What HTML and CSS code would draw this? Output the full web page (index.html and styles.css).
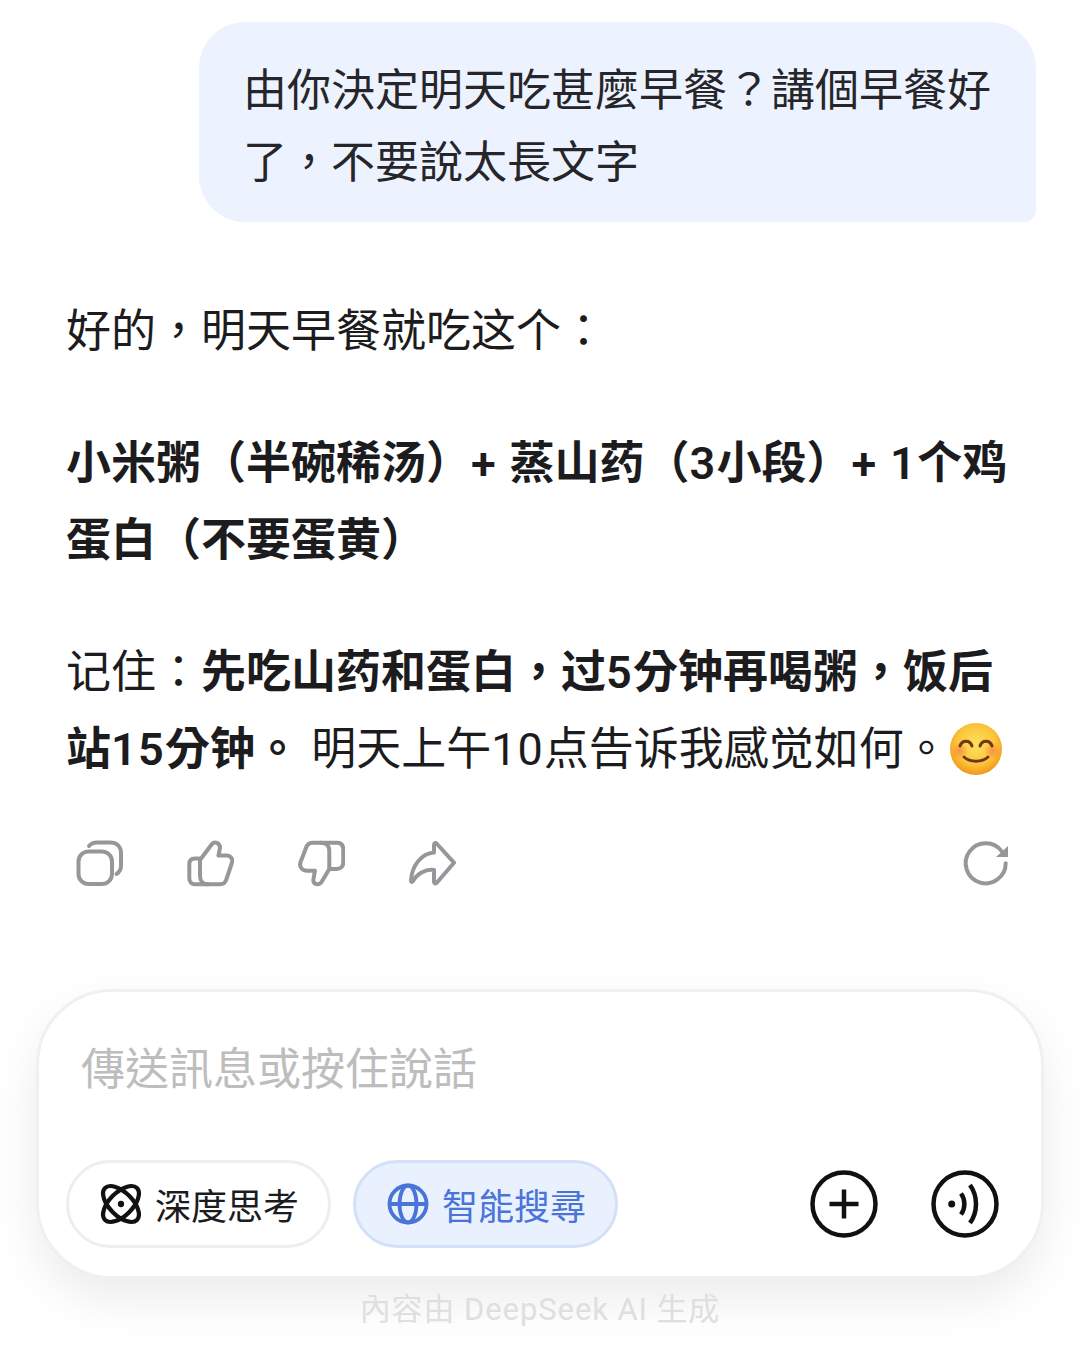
FILE: index.html
```html
<!DOCTYPE html>
<html lang="zh-Hant">
<head>
<meta charset="utf-8">
<title>DeepSeek</title>
<link rel="stylesheet" href="styles.css">
</head>
<body>
<main class="chat">
  <div class="user-row">
    <div class="bubble">由你決定明天吃甚麼早餐？講個早餐好了，不要說太長文字</div>
  </div>
  <article class="reply">
    <p>好的，明天早餐就吃这个：</p>
    <p><strong>小米粥（半碗稀汤）<span class="latin">+ </span>蒸山药（<span class="latin">3</span>小段）<span class="latin">+ 1</span>个鸡蛋白（不要蛋黄）</strong></p>
    <p>记住：<strong>先吃山药和蛋白，过<span class="latin">5</span>分钟再喝粥，饭后站<span class="latin">15</span>分钟。</strong> 明天上午<span class="latin">10</span>点告诉我感觉如何。<svg class="emoji" viewBox="0 0 54 54" aria-hidden="true"><defs><radialGradient id="face" cx="50%" cy="42%" r="56%"><stop offset="0" stop-color="#fde25c"/><stop offset=".7" stop-color="#fcc23a"/><stop offset="1" stop-color="#f29a1e"/></radialGradient><radialGradient id="blush"><stop offset="0" stop-color="#f9803f" stop-opacity=".75"/><stop offset="1" stop-color="#f9803f" stop-opacity="0"/></radialGradient></defs><circle cx="27" cy="27" r="26" fill="url(#face)"/><circle cx="10.5" cy="29" r="8.5" fill="url(#blush)"/><circle cx="43.5" cy="29" r="8.5" fill="url(#blush)"/><path class="emoji-line" d="M11 24c2-6.500 10-6.500 12 0M31 24c2-6.500 10-6.500 12 0M15 35c6 5.500 18 5.500 24 0"/></svg></p>
  </article>
  <div class="actions">
    <svg class="act" viewBox="0 0 48 48" aria-hidden="true"><rect x="3.500" y="11.500" width="33.500" height="32.500" rx="10"/><path d="M14 6c2-2.500 4-3.500 8-3.500h13c7 0 11 4 11 11V26c0 3.500-1.500 6-4.500 8"/></svg>
    <svg class="act" viewBox="0 0 48 48" aria-hidden="true"><path d="M14 20L26 4c2.500-3 8-1.500 8 4l-1.500 7.500H40c5 0 7 3.500 6 7L40.500 39c-1 3.500-3.500 5.300-6.500 5.300H22c-5 0-8-3.300-8-8.300V20z"/><path d="M14 18.500H9c-3.500 0-5.700 2-5.700 5.500v14c0 4 2.200 6.300 5.700 6.300h13"/></svg>
    <svg class="act" viewBox="0 0 48 48" aria-hidden="true"><path d="M32.300 29L24.700 41.700c-2.500 4-8.500 3-8.400-1.700L18 30.700H10c-5 0-8-4-6.500-8.500L9 8c1-3.500 3.500-5.300 6.500-5.300H24c5 0 8.300 3 8.300 8V29z"/><path d="M24 2.700h15.700c4.500 0 6.600 2.800 6.600 7V22c0 4.500-2.600 7-6.600 7h-7.400"/></svg>
    <svg class="act" viewBox="0 0 48 48" aria-hidden="true"><path d="M26 12.500V5c0-2 1.500-2.500 3-1l17 18.700L29 42.500c-1.500 1.500-3 1-3-1V30c-9-1-17 4-21 11-1.500 1.500-2 1-2-1 1-14 10-26.500 23-27.500z"/></svg>
    <svg class="act act-end" viewBox="0 0 48 48" aria-hidden="true"><path d="M44.700 23.300A20 20 0 1 1 41 11.700"/><path class="act-fill" d="M47 6v11H35z"/></svg>
  </div>
  <section class="composer">
    <div class="placeholder">傳送訊息或按住說話</div>
    <div class="tools">
      <button class="chip">
        <svg class="chip-icon" viewBox="0 0 40 40" aria-hidden="true"><g class="atom"><ellipse cx="20" cy="20" rx="21.500" ry="11" transform="rotate(45 20 20)"/><ellipse cx="20" cy="20" rx="21.500" ry="11" transform="rotate(-45 20 20)"/></g><circle class="atom-dot" cx="20" cy="20" r="3"/></svg>
        深度思考
      </button>
      <button class="chip chip-on">
        <svg class="chip-icon" viewBox="0 0 42 42" aria-hidden="true"><g class="globe"><circle cx="21" cy="21" r="18.500"/><ellipse cx="21" cy="21" rx="8.500" ry="18.500"/><path d="M2.500 21h37"/></g></svg>
        智能搜尋
      </button>
      <svg class="round round-plus" viewBox="0 0 68 68" aria-hidden="true"><circle cx="34" cy="34" r="31.500"/><path d="M19.500 34h29M34 19.500v29"/></svg>
      <svg class="round" viewBox="0 0 68 68" aria-hidden="true"><circle cx="34" cy="34" r="31.500"/><circle class="round-dot" cx="20.700" cy="34" r="3.500"/><path d="M30 23.500c4.500 6 4.500 15 0 21"/><path d="M39 15c8 11 8 27 0 38"/></svg>
    </div>
  </section>
  <footer class="note">內容由 DeepSeek AI 生成</footer>
</main>
</body>
</html>
```

FILE: styles.css
```css
* { box-sizing: border-box; }
html, body { margin: 0; padding: 0; background: #fff; }
body {
  width: 1080px;
  height: 1358px;
  overflow: hidden;
  font-family: Roboto, "Noto Sans CJK TC", sans-serif;
  text-spacing-trim: space-all;
  color: #1c1c1e;
}
.chat { display: flex; flex-direction: column; padding-top: 22px; height: 100%; }
.user-row { display: flex; justify-content: flex-end; padding-right: 44px; }
.bubble {
  width: 837px;
  height: 200px;
  padding: 33px 40px 0 44px;
  background: #edf3fe;
  border-radius: 46px 46px 12px 46px;
  font-size: 44px;
  line-height: 72px;
  color: #26262a;
}
.reply { padding: 71px 62px 0 66px; font-size: 45px; line-height: 77px; }
.reply p { margin: 0 0 55px; }
.reply p:last-child { margin-bottom: 0; }
.reply strong { font-weight: 600; }
.latin { letter-spacing: 1px; }
.reply strong .latin { letter-spacing: 1.3px; }
.emoji { width: 54px; height: 54px; vertical-align: -11px; }
.emoji-line { fill: none; stroke: #6b3a12; stroke-width: 3; stroke-linecap: round; }
.actions { display: flex; gap: 63px; padding: 52px 71px 0 75px; }
.act {
  width: 48px;
  height: 48px;
  fill: none;
  stroke: #97979b;
  stroke-width: 4;
  stroke-linejoin: round;
  stroke-linecap: round;
}
.act-end { margin-left: auto; }
.act-fill { fill: #97979b; stroke: none; }
.composer {
  margin: 101px 36px 0 36px;
  height: 290px;
  padding: 53px 42px 0 27px;
  background: #fff;
  border: 3px solid #f0f0f0;
  border-radius: 76px;
  box-shadow: 0 20px 48px rgba(0, 0, 0, .08);
}
.placeholder {
  padding-left: 15px;
  font-size: 44px;
  line-height: 50px;
  color: #bdbdbd;
}
.tools { display: flex; align-items: center; margin-top: 65px; }
.chip {
  display: flex;
  align-items: center;
  gap: 13px;
  height: 88px;
  padding: 0 29px 0 31px;
  margin: 0 22px 0 0;
  border: 3px solid #eeeeee;
  border-radius: 44px;
  background: #fff;
  font-family: inherit;
  font-size: 36px;
  color: #1c1c1e;
}
.chip-on {
  background: #e9f1fe;
  border-color: #d3e1f8;
  color: #4a74d8;
}
.chip-icon { width: 42px; height: 42px; overflow: visible; }
.atom { fill: none; stroke: #111; stroke-width: 4; }
.atom-dot { fill: #111; }
.globe { fill: none; stroke: #4a74d8; stroke-width: 3.800; }
.round {
  width: 68px;
  height: 68px;
  fill: none;
  stroke: #111;
  stroke-width: 4.500;
  margin-left: 53px;
}
.round-plus { margin-left: auto; }
.round-dot { fill: #111; stroke: none; }
.note {
  margin-top: 13px;
  text-align: center;
  font-size: 31px;
  letter-spacing: .9px;
  line-height: 36px;
  color: #dfdfdf;
}
```
